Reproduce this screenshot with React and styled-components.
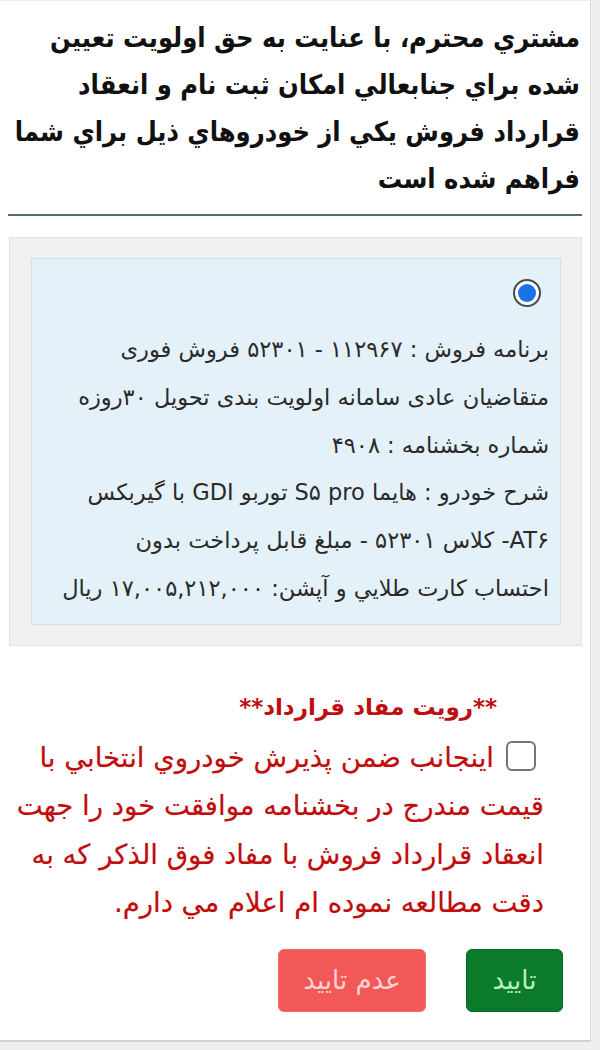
import React from 'react'
import styled, { createGlobalStyle } from 'styled-components'

const GlobalStyle = createGlobalStyle`
    html, body {
        margin: 0;
        padding: 0;
        background: #efefef;
    }
    body {
        font-family: 'DejaVu Sans', 'Noto Sans', sans-serif;
    }
`

const Card = styled.div`
    width: 590px;
    background: #fff;
    border-right: 1px solid #dadada;
    border-bottom: 2px solid #d2d2d2;
    border-top: 1px solid #ececec;
    direction: rtl;
    padding-bottom: 28px;
`
const Header = styled.h1`
    margin: 0;
    padding: 13px 10px 0 10px;
    font-family: 'DejaVu Sans Condensed', 'DejaVu Sans', sans-serif;
    font-size: 27px;
    font-weight: bold;
    line-height: 47px;
    color: #111;
    white-space: nowrap;
`
const Divider = styled.hr`
    margin: 12px 8px 0 8px;
    border: 0;
    height: 2px;
    background: #50706f;
`
const OfferBox = styled.div`
    margin: 21px 8px 0 9px;
    padding: 20px 20px 20px 21px;
    background: #f1f1f1;
    border: 1px solid #e3e3e3;
`
const OfferInner = styled.div`
    background: #e4f1f9;
    border: 1px solid #d2e2ec;
    padding: 20px 11px 11px 11px;
`
const RadioRow = styled.div`
    display: flex;
    padding-right: 8px;
    margin-bottom: 19px;
`
const Radio = styled.span`
    width: 28px;
    height: 28px;
    box-sizing: border-box;
    border-radius: 50%;
    border: 2px solid #4a4a4a;
    background: #fff;
    display: flex;
    align-items: center;
    justify-content: center;
    &::after {
        content: '';
        width: 18px;
        height: 18px;
        border-radius: 50%;
        background: #1a73e8;
    }
`
const OfferText = styled.div`
    font-size: 22.5px;
    line-height: 47.8px;
    color: #2a2a2a;
    white-space: nowrap;
`
const Notice = styled.div`
    margin-top: 37px;
    color: #c00d0d;
`
const NoticeTitle = styled.div`
    padding-right: 93px;
    font-size: 23px;
    font-weight: bold;
    line-height: 48px;
`
const NoticeText = styled.div`
    padding-right: 46px;
    margin-top: 2px;
    font-size: 27.5px;
    line-height: 48.5px;
    white-space: nowrap;
    text-shadow: 0 0 1px rgba(200, 0, 0, 0.35);
`
const CheckBox = styled.span`
    display: inline-block;
    vertical-align: -4px;
    width: 30px;
    height: 30px;
    box-sizing: border-box;
    border: 2px solid #767676;
    border-radius: 6px;
    background: #fff;
    margin-left: 12px;
    margin-right: 8px;
`
const Buttons = styled.div`
    display: flex;
    gap: 40px;
    padding-right: 27px;
    margin-top: 22px;
`
const Button = styled.button`
    height: 63px;
    width: ${props => props.wide ? '148px' : '97px'};
    border-radius: 6px;
    font-family: 'DejaVu Sans', sans-serif;
    font-size: 26px;
    background: ${props => props.danger ? '#f35858' : '#0b7a2b'};
    color: ${props => props.danger ? '#fcd2d2' : '#b4f3bb'};
    border: 1px solid ${props => props.danger ? '#ef6b6b' : '#09672a'};
    cursor: pointer;
`

export default function App(){
    return(
        <>
            <GlobalStyle />
            <Card>
                <Header>
                    مشتري محترم، با عنايت به حق اولويت تعيين<br/>
                    شده براي جنابعالي امكان ثبت نام و انعقاد<br/>
                    قرارداد فروش يكي از خودروهاي ذيل براي شما<br/>
                    فراهم شده است
                </Header>
                <Divider />
                <OfferBox>
                    <OfferInner>
                        <RadioRow>
                            <Radio />
                        </RadioRow>
                        <OfferText>
                            برنامه فروش : ۱۱۲۹۶۷ - ۵۲۳۰۱ فروش فوری<br/>
                            متقاضیان عادی سامانه اولویت بندی تحویل ۳۰روزه<br/>
                            شماره بخشنامه : ۴۹۰۸<br/>
                            شرح خودرو : هایما S۵ pro توربو GDI با گیربکس<br/>
                            AT۶- کلاس ۵۲۳۰۱ - مبلغ قابل پرداخت بدون<br/>
                            احتساب کارت طلايي و آپشن: ۱۷,۰۰۵,۲۱۲,۰۰۰ ریال
                        </OfferText>
                    </OfferInner>
                </OfferBox>
                <Notice>
                    <NoticeTitle>**رويت مفاد قرارداد**</NoticeTitle>
                    <NoticeText>
                        <CheckBox />
                        اينجانب ضمن پذيرش خودروي انتخابي با<br/>
                        قيمت مندرج در بخشنامه موافقت خود را جهت<br/>
                        انعقاد قرارداد فروش با مفاد فوق الذكر كه به<br/>
                        دقت مطالعه نموده ام اعلام مي دارم.
                    </NoticeText>
                </Notice>
                <Buttons>
                    <Button>تایید</Button>
                    <Button danger wide>عدم تایید</Button>
                </Buttons>
            </Card>
        </>
    )
}
